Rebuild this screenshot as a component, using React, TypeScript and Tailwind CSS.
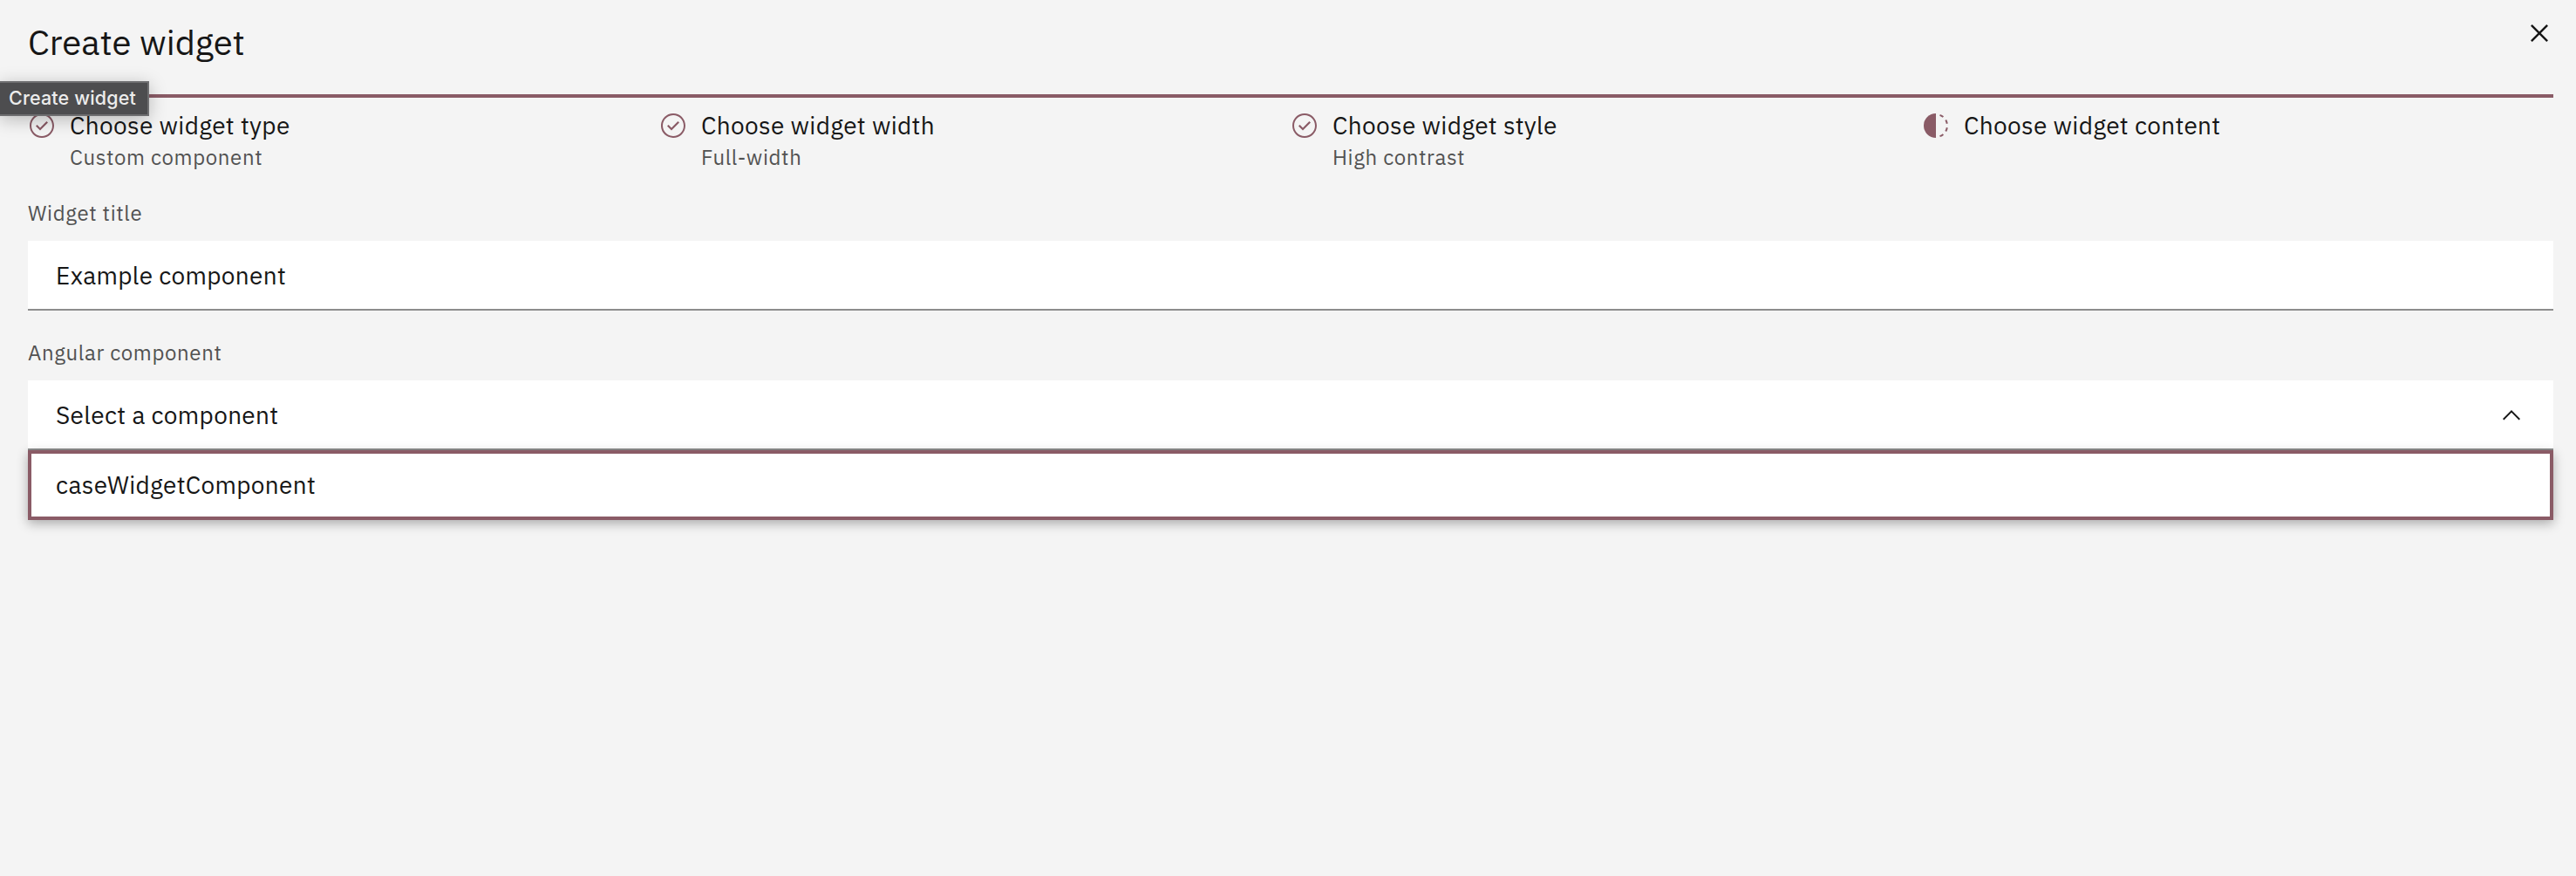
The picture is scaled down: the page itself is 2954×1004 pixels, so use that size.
type Step = { title: string; detail?: string; done: boolean };

const steps: Step[] = [
  { title: "Choose widget type", detail: "Custom component", done: true },
  { title: "Choose widget width", detail: "Full-width", done: true },
  { title: "Choose widget style", detail: "High contrast", done: true },
  { title: "Choose widget content", done: false },
];

function CheckOutlineIcon() {
  return (
    <svg viewBox="0 0 16 16" className="size-8 shrink-0 fill-[#8a5b66]">
      <path d="M8 1C4.1 1 1 4.1 1 8s3.1 7 7 7 7-3.1 7-7-3.1-7-7-7zm0 13c-3.3 0-6-2.7-6-6s2.7-6 6-6 6 2.7 6 6-2.7 6-6 6z" />
      <path d="M7 10.8 4.5 8.3l.8-.8L7 9.2l3.7-3.7.8.8z" />
    </svg>
  );
}

function IncompleteIcon() {
  return (
    <svg viewBox="0 0 32 32" className="size-8 shrink-0 fill-[#8a5b66]">
      <path d="M23.7642 6.8593l1.2851-1.5315A13.976 13.976 0 0 0 20.8672 2.887l-.6836 1.8776A11.9729 11.9729 0 0 1 23.7642 6.8593z" />
      <path d="M27.81 14l1.9677-.4128A13.8888 13.8888 0 0 0 28.14 9.0457L26.4087 10A12.52 12.52 0 0 1 27.81 14z" />
      <path d="M20.1836 27.2354l.6836 1.8776a13.976 13.976 0 0 0 4.1821-2.4408l-1.2851-1.5315A11.9729 11.9729 0 0 1 20.1836 27.2354z" />
      <path d="M26.4087 22L28.14 23a14.14 14.14 0 0 0 1.6382-4.5872L27.81 18.0659A12.1519 12.1519 0 0 1 26.4087 22z" />
      <path d="M16 30V2a14 14 0 0 0 0 28z" />
    </svg>
  );
}

function StepItem({ title, detail, done }: Step) {
  return (
    <li className="flex flex-1 gap-4 border-t-4 border-[#8a5b66] pt-4">
      {done ? <CheckOutlineIcon /> : <IncompleteIcon />}
      <div>
        <p className="text-[28px] leading-8 tracking-[0.32px]">{title}</p>
        {detail && (
          <p className="mt-1 text-2xl leading-8 tracking-[0.64px] text-[#525252]">{detail}</p>
        )}
      </div>
    </li>
  );
}

export default function App() {
  return (
    <div className="relative h-[1004px] overflow-hidden bg-[#f4f4f4] pl-8 pr-[26px] font-['IBM_Plex_Sans',Roboto,sans-serif] text-[#161616]">
      <header className="flex h-[108px] items-start justify-between">
        <h1 className="mt-5 text-[40px] leading-[56px]">Create widget</h1>
        <button aria-label="Close" className="-mr-1 mt-[18px]">
          <svg viewBox="0 0 32 32" className="size-10 fill-[#161616]">
            <path d="M24 9.4 22.6 8 16 14.6 9.4 8 8 9.4l6.6 6.6L8 22.6 9.4 24l6.6-6.6 6.6 6.6 1.4-1.4-6.6-6.6L24 9.4z" />
          </svg>
        </button>
      </header>

      <ol className="flex">
        {steps.map((step) => (
          <StepItem key={step.title} {...step} />
        ))}
      </ol>

      <div className="mt-8">
        <label htmlFor="title" className="block text-2xl leading-8 tracking-[0.64px] text-[#525252]">
          Widget title
        </label>
        <input
          id="title"
          defaultValue="Example component"
          className="mt-4 block h-20 w-full border-b-2 border-[#8d8d8d] bg-white px-8 text-[28px] tracking-[0.32px] outline-none"
        />
      </div>

      <div className="mt-8">
        <p className="text-2xl leading-8 tracking-[0.64px] text-[#525252]">Angular component</p>
        <button className="mt-4 flex h-20 w-full items-center justify-between border-b-2 border-[#8d8d8d] bg-white px-8 pt-0.5 text-[28px] tracking-[0.32px]">
          Select a component
          <svg viewBox="0 0 16 16" className="size-8 fill-[#161616]">
            <path d="m8 5 5 5-.7.7L8 6.4l-4.3 4.3L3 10z" />
          </svg>
        </button>
        <ul className="relative shadow-[0_4px_12px_rgba(0,0,0,0.3)]">
          <li className="flex h-20 items-center border-4 border-[#8a5b66] bg-white px-7 text-[28px] tracking-[0.32px]">
            caseWidgetComponent
          </li>
        </ul>
      </div>

      <div className="absolute left-0 top-[93px] flex h-10 w-[171px] items-center border-2 border-l-0 border-[#6e6e70] bg-[#4d4d4f] pb-0.5 pl-2.5 font-[Inter,sans-serif] text-[21.5px] font-medium tracking-[0.15px] text-[#ececec] shadow-[0_4px_20px_rgba(0,0,0,0.25)]">
        Create widget
      </div>
    </div>
  );
}
